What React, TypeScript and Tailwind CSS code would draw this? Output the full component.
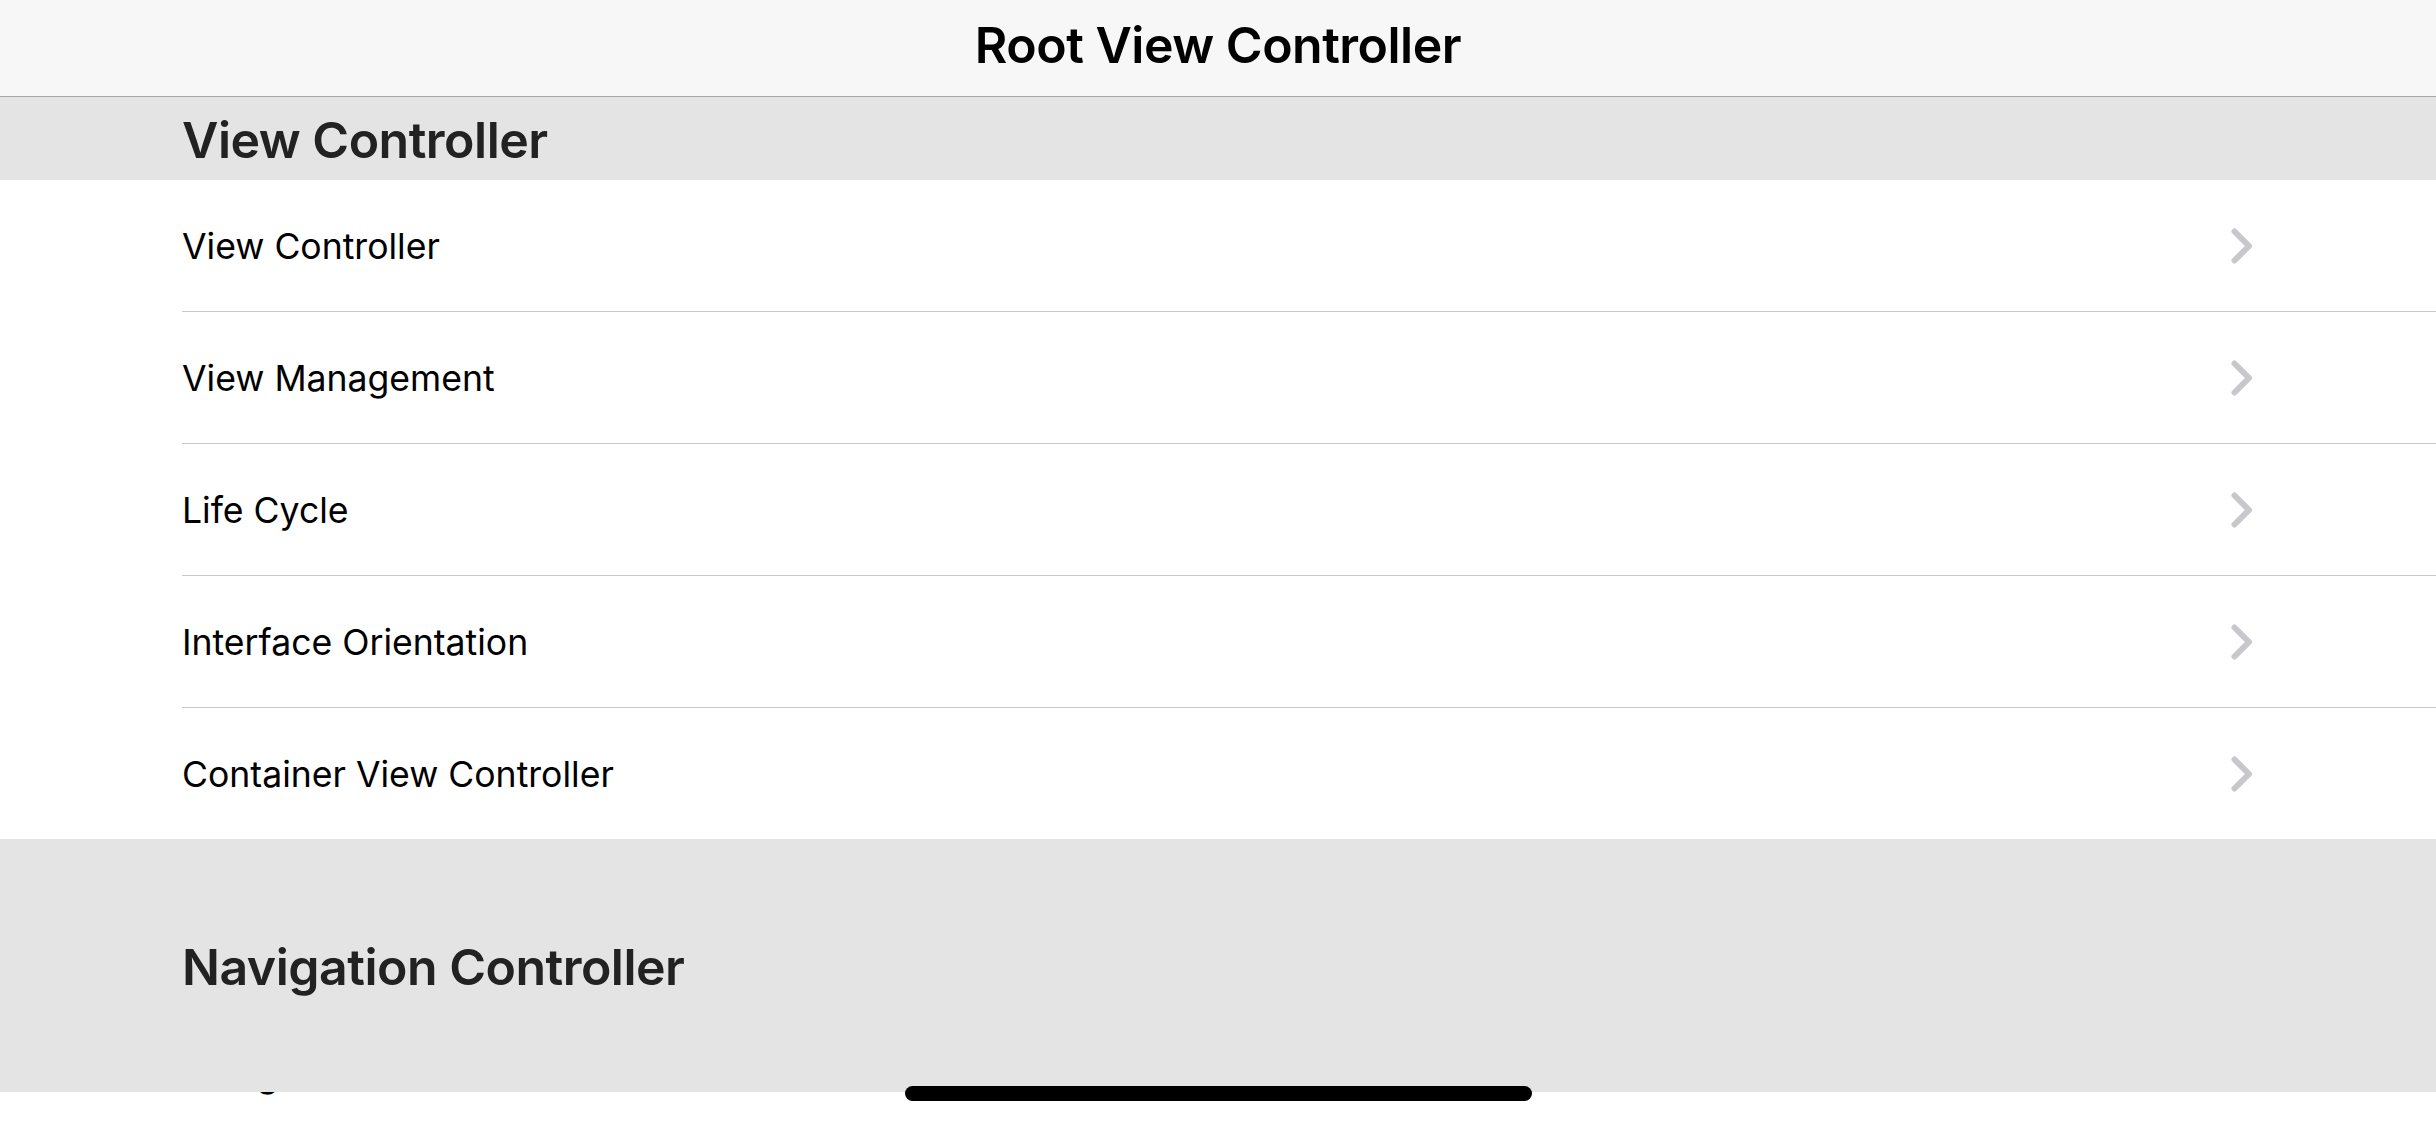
const rows = [
  "View Controller",
  "View Management",
  "Life Cycle",
  "Interface Orientation",
  "Container View Controller",
];

function Chevron() {
  return (
    <svg width="22" height="36" viewBox="0 0 22 36" fill="none">
      <polyline
        points="3.5,3.5 18,18 3.5,32.5"
        stroke="#c7c7cc"
        strokeWidth="6"
        strokeLinecap="round"
        strokeLinejoin="round"
      />
    </svg>
  );
}

export default function App() {
  return (
    <div
      className="relative w-[2436px] h-[1125px] overflow-hidden bg-white"
      style={{ fontFamily: "Inter, 'Noto Sans', sans-serif" }}
    >
      {/* Navigation bar */}
      <div className="h-[97px] bg-[#f7f7f7] border-b border-[#a6a6a6] flex items-center justify-center">
        <span className="text-[50px] font-semibold text-black tracking-[-0.5px] leading-none -mt-[6px]">
          Root View Controller
        </span>
      </div>

      {/* Section header */}
      <div className="h-[83px] bg-[#e4e4e4] flex items-center pl-[182px]">
        <span className="text-[50px] font-semibold text-[#222222] tracking-[-0.5px] leading-none mt-[3px]">
          View Controller
        </span>
      </div>

      {/* Rows */}
      <div className="flex flex-col">
        {rows.map((r, i) => (
          <div key={r} className="pl-[182px]">
            <div
              className={`flex items-center justify-between pr-[183px] ${
                i < rows.length - 1 ? "h-[132px] border-b border-[#c8c7cc]" : "h-[131px]"
              }`}
            >
              <span className="text-[35.6px] text-black leading-none mt-[2px]">{r}</span>
              <Chevron />
            </div>
          </div>
        ))}
      </div>

      {/* Next section header */}
      <div className="h-[253px] bg-[#e4e4e4] flex items-center pl-[182px]">
        <span className="text-[50px] font-semibold text-[#222222] tracking-[-0.5px] leading-none mt-[3px]">
          Navigation Controller
        </span>
      </div>

      {/* Row peeking under the header */}
      <div className="h-[33px] overflow-hidden pl-[182px]">
        <div className="-mt-[35px] text-[35.6px] text-black leading-none">Navigation Bar</div>
      </div>

      {/* Home indicator */}
      <div className="absolute left-[905px] top-[1086px] w-[627px] h-[15px] rounded-full bg-black" />
    </div>
  );
}
